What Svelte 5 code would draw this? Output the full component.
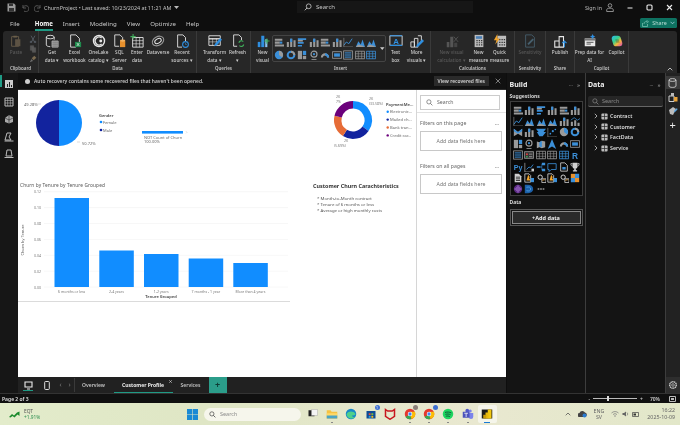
<script>
  const w = '#e8e8e8', g = '#9a9a9a', b = '#2f8fe0', o = '#e8912d', gr = '#3fae5a';

  // 16x16 ribbon glyphs
  const glyphs = {
    paste: `<path d="M3 3h8v11H3z" fill="none" stroke="#6b5f4a"/><path d="M7 6h6v8H7z" fill="#5d5344"/><path d="M5 2h4v2H5z" fill="#6b5f4a"/>`,
    db: `<ellipse cx="6" cy="3.5" rx="4.5" ry="2" fill="none" stroke="${w}"/><path d="M1.500 3.500v9c0 1 2 2 4.500 2M10.500 3.500v3" fill="none" stroke="${w}"/><path d="M8 8h7v7H8z" fill="#555" stroke="${w}" stroke-width=".7"/><path d="M10.300 8v7M12.600 8v7M8 10.400h7M8 12.700h7" stroke="${w}" stroke-width=".5"/>`,
    excel: `<path d="M3 1h6l4 4v6M3 1v14h6" fill="none" stroke="${w}"/><path d="M8 9h7v6H8z" fill="#1f8a4c"/><path d="M10 10.200l3 3.600M13 10.200l-3 3.600" stroke="#fff" stroke-width=".7"/>`,
    onelake: `<circle cx="8" cy="8" r="6.300" fill="none" stroke="${w}" stroke-width="1.600"/><path d="M11 4.500A4.500 4.500 0 1 0 11 11.500" fill="none" stroke="${w}" stroke-width="1.500"/><circle cx="10" cy="8" r="1.700" fill="${w}"/>`,
    sql: `<path d="M2 1h6l3 3v3M2 1v13h5" fill="none" stroke="${w}"/><path d="M8 7.500h6v7.500H8z" fill="${o}"/><ellipse cx="11" cy="7.500" rx="3" ry="1.300" fill="#f2b363"/>`,
    enter: `<path d="M3 4h12v11H3z" fill="none" stroke="${w}"/><path d="M3 7.600h12M3 11.200h12M7 4v11M11 4v11" stroke="${w}" stroke-width=".7"/><path d="M3.500 0v6M.5 3h6" stroke="${gr}" stroke-width="1.200"/>`,
    dataverse: `<ellipse cx="8" cy="8" rx="7" ry="5" fill="none" stroke="${g}" stroke-width="1.200" transform="rotate(-30 8 8)"/><ellipse cx="8" cy="8" rx="4" ry="2.500" fill="none" stroke="${w}" stroke-width="1.100" transform="rotate(-30 8 8)"/>`,
    recent: `<path d="M3 1h6l3 3v4M3 1v14h5" fill="none" stroke="${w}"/><circle cx="12" cy="12" r="3.300" fill="none" stroke="${b}" stroke-width="1.200"/><path d="M12 10.300V12h1.500" stroke="${b}" stroke-width=".7" fill="none"/>`,
    transform: `<path d="M1 2h13v11H1z" fill="none" stroke="${w}"/><path d="M1 5.500h13" stroke="${w}" stroke-width="1.500"/><path d="M1 9h10M5.300 5v8M9.600 5v8" stroke="${w}" stroke-width=".6"/><path d="M7 14l1-3 6-6.500 2 2L10 13z" fill="${b}"/>`,
    refresh: `<path d="M3 1h6l3 3v3M3 1v13h4" fill="none" stroke="${w}"/><path d="M9 10a3 3 0 0 1 5-1.400M14.600 12a3 3 0 0 1-5 1.400" fill="none" stroke="${gr}" stroke-width="1.200"/>`,
    newvisual: `<path d="M2 9h3v6H2z" fill="${b}"/><path d="M6 2h3.500v13H6z" fill="${b}"/><path d="M10.500 6H13v9h-2.500z" fill="#8cc2ee"/><path d="M12.500 5v6M9.500 8h6" stroke="${gr}" stroke-width="1.200"/>`,
    textbox: `<path d="M1 2h14v11H1z" fill="none" stroke="${w}"/><path d="M1 2h14M1 13h14" stroke="${b}" stroke-width="1.400"/><text x="8" y="11" font-size="9" font-family="Liberation Sans" font-weight="700" fill="${b}" text-anchor="middle">A</text>`,
    more: `<path d="M1 9h4v6H1z" fill="none" stroke="${w}"/><path d="M5 5h4v10H5z" fill="none" stroke="${w}"/><path d="M9 2h4v7" fill="none" stroke="${w}"/><path d="M7 15l1-3 6-6 2 2-6 6z" fill="${b}"/>`,
    newcalc: `<path d="M2 9h3v6H2zM6 3h3.500v12H6z" fill="#555"/><path d="M10 3l5 6M15 3l-5 6" stroke="#555"/><path d="M10.500 10H14v5h-3.500z" fill="#444"/>`,
    calc: `<path d="M3 1h10v14H3z" fill="#bdbdbd"/><path d="M4.500 2.500h7v3h-7z" fill="#4a7fb5"/><path d="M5 7.500h1.500M7.700 7.500h1.500M10.300 7.500h1.500M5 10h1.500M7.700 10h1.500M10.300 10h1.500M5 12.500h1.500M7.700 12.500h1.500M10.300 12.500h1.500" stroke="#333" stroke-width="1.300"/>`,
    quick: `<path d="M5 2h10v13H5z" fill="#bdbdbd"/><path d="M7 6.500h1.500M9.700 6.500h1.500M12.300 6.500h1.500M7 9.500h1.500M9.700 9.500h1.500M12.300 9.500h1.500M7 12.500h1.500M9.700 12.500h1.500M12.300 12.500h1.500" stroke="#333" stroke-width="1.300"/><path d="M5 0L1 7h3L2.500 12 8 5H5z" fill="#f2a52c"/>`,
    sens: `<path d="M3 1h7l3 3v11H3z" fill="none" stroke="#47606e"/><path d="M5 11l6-6 1.500 1.500-6 6z" fill="#47606e"/>`,
    publish: `<path d="M2 8h5v7H2zM7 3h5v12H7z" fill="none" stroke="${w}" stroke-width="1.200"/><path d="M13 15V8M10.500 10.500L13 8l2.500 2.500" fill="none" stroke="${b}" stroke-width="1.300"/>`,
    prep: `<path d="M2 5h12v9H2z" fill="${w}"/><path d="M2 5h12v2.500H2z" fill="#777"/><path d="M4 9.500h8M4 11.500h5" stroke="#444"/><path d="M11 0l1 2 2 1-2 1-1 2-1-2-2-1 2-1z" fill="${b}"/>`,
    copilot: `<path d="M5 2h4c2 0 3 1 3.500 3L14 10c.5 2-.5 4-3 4H7C5 14 4 13 3.500 11L2 6c-.5-2 1-4 3-4z" fill="url(#cop)"/><path d="M6 6h4l1 4H7z" fill="#1d1d1d" opacity=".25"/>`,
  };

  const mini = {
    hbar: c => `<path d="M1 2h9v2.500H1zM1 5.500h6V8H1zM1 9h11v2.500H1z" fill="${c[0]}"/><path d="M7 5.500h3V8H7z" fill="${c[1]}"/>`,
    vbar: c => `<path d="M1 6h2.500v6H1zM5 2h2.500v10H5zM9 4h2.500v8H9z" fill="${c[0]}"/><path d="M5 2h2.500v4H5z" fill="${c[1]}"/>`,
    hgrp: c => `<path d="M1 1.500h10v2H1zM1 6h7v2H1zM1 9.500h5v2H1z" fill="${c[1]}"/><path d="M1 3.500h6v2H1z" fill="${c[0]}"/>`,
    line: c => `<path d="M1 10l3-4 3 2 4-6" fill="none" stroke="${c[1]}" stroke-width="1.100"/><path d="M1 1v11h11" fill="none" stroke="${c[0]}" stroke-width=".7"/>`,
    area: c => `<path d="M1 12l3-7 3 4 2-6 3 9z" fill="${c[1]}"/><path d="M1 12l3-3 3 1 5 2z" fill="${c[0]}"/>`,
    combo: c => `<path d="M1 7h2.500v5H1zM5 5h2.500v7H5zM9 8h2.500v4H9z" fill="${c[0]}"/><path d="M1 5l4-3 4 3 3-2" fill="none" stroke="${c[1]}" stroke-width=".9"/>`,
    ribbon: c => `<path d="M1 2l5 4 5-4v9l-5-3-5 3z" fill="${c[0]}"/><path d="M1 2l5 4 5-4v3l-5 3-5-3z" fill="${c[1]}"/>`,
    funnel: c => `<path d="M0 2h12L9 6h3L8 11H4L1 6h2z" fill="${c[1]}"/>`,
    scatter: c => `<path d="M1 1v11h11" fill="none" stroke="${c[0]}" stroke-width=".7"/><circle cx="4" cy="8" r="1" fill="${c[1]}"/><circle cx="7" cy="5" r="1.300" fill="${c[1]}"/><circle cx="10" cy="3" r="1" fill="${c[1]}"/>`,
    pie: c => `<circle cx="6" cy="6" r="5" fill="${c[0]}"/><path d="M6 6V1a5 5 0 0 1 4 8z" fill="${c[1]}"/>`,
    donut: c => `<circle cx="6" cy="6" r="4" fill="none" stroke="${c[1]}" stroke-width="2.400"/><path d="M6 2a4 4 0 0 1 4 4" fill="none" stroke="${c[0]}" stroke-width="2.400"/>`,
    tree: c => `<path d="M1 1h5v10H1z" fill="${c[1]}"/><path d="M7 1h4v5H7z" fill="${c[0]}"/><path d="M7 7h4v4H7z" fill="${c[1]}"/>`,
    map: c => `<circle cx="6" cy="5" r="3.600" fill="none" stroke="${c[0]}" stroke-width="1.400"/><path d="M3 11h6v1.500H3z" fill="${c[0]}"/><circle cx="6" cy="5" r="1.300" fill="${c[1]}"/>`,
    filled: c => `<path d="M1 3l3 1 3-2 4 1v7l-4 1-3-1-3 1z" fill="${c[1]}"/><path d="M4 4l3-2v8l-3-1z" fill="${c[0]}"/>`,
    nav: c => `<path d="M6 0l5 12-5-3-5 3z" fill="${c[1]}"/>`,
    gauge: c => `<path d="M1 9a5 5 0 0 1 10 0H8.500a2.500 2.500 0 0 0-5 0z" fill="${c[0]}"/><path d="M6 4a5 5 0 0 1 5 5H8.500A2.500 2.500 0 0 0 6 6.500z" fill="${c[1]}"/>`,
    card: c => `<path d="M.5 2h11v8H.5z" fill="none" stroke="${c[0]}"/><path d="M2.500 4h7v4h-7z" fill="${c[1]}"/>`,
    kpi: c => `<path d="M.5 1h11v10H.5z" fill="none" stroke="${c[0]}"/><path d="M2 3.500h8M2 6h8M2 8.500h8" stroke="${c[1]}" stroke-width="1.200"/>`,
    slicer: c => `<path d="M.5 2h11v8H.5z" fill="#333" stroke="${c[0]}"/><circle cx="3.500" cy="5" r="1.200" fill="#e04040"/><circle cx="3.500" cy="8" r="1" fill="#3fae5a"/><path d="M6 5h4M6 8h4" stroke="${c[0]}"/>`,
    table: c => `<path d="M.5 1.500h11v9H.5z" fill="none" stroke="${c[0]}"/><path d="M.5 4.500h11M.5 7.500h11M4 1.500v9M8 1.500v9" stroke="${c[0]}" stroke-width=".7"/>`,
    matrix: c => `<path d="M.5 1.500h11v9H.5z" fill="none" stroke="${c[1]}"/><path d="M.5 4.500h11M.5 7.500h11M4 1.500v9M8 1.500v9" stroke="${c[1]}" stroke-width=".8"/>`,
    r: c => `<text x="6" y="10.500" font-size="10" font-weight="700" font-family="Liberation Sans" fill="${c[1]}" text-anchor="middle">R</text>`,
    py: c => `<text x="6" y="10" font-size="8.500" font-weight="700" font-family="Liberation Sans" fill="${c[1]}" text-anchor="middle">Py</text>`,
    decomp: c => `<path d="M1 1v11h11" fill="none" stroke="${c[0]}" stroke-width=".7"/><path d="M3 9l3-3 2 1 3-4" stroke="${c[1]}" fill="none"/><path d="M9 8h3v3H9z" fill="${c[0]}"/>`,
    tree2: c => `<path d="M1 5h4v2H1zM7 1h4v3H7zM7 8h4v3H7z" fill="${c[1]}"/><path d="M5 6h2V2.500M5 6h2v3.500" stroke="${c[1]}" fill="none" stroke-width=".6"/>`,
    chat: c => `<path d="M1 2h10v7H5l-2.500 2.500V9H1z" fill="none" stroke="${c[1]}"/>`,
    doc: c => `<path d="M2 1h5l3 3v7H2z" fill="none" stroke="${c[0]}"/><path d="M4 6h4v3H4z" fill="${c[1]}"/>`,
    trophy: c => `<path d="M3 1h6v4a3 3 0 0 1-6 0zM5 8h2v2H5zM3.500 10h5v1.500h-5z" fill="${c[0]}"/><path d="M3 2H1c0 2 1 3 2 3M9 2h2c0 2-1 3-2 3" fill="none" stroke="${c[0]}"/>`,
    paged: c => `<path d="M2 1h5l3 3v7H2z" fill="${c[0]}"/><path d="M3.500 5h5M3.500 7h5M3.500 9h5" stroke="#222"/>`,
    orange: c => `<path d="M1 1h5l2 2v8H1z" fill="none" stroke="${c[0]}"/><path d="M3 9l2-7 2 3-1 1 2 3z" fill="#f2a52c"/><path d="M8 6h4v5H8z" fill="${c[1]}"/>`,
    gear: c => `<circle cx="5" cy="5" r="2.600" fill="none" stroke="${c[0]}" stroke-width="1.200"/><path d="M7 7h5v4.500H7z" fill="none" stroke="${c[0]}"/><path d="M8 9.500l1.500-2 1 1" stroke="#f2a52c" fill="none"/>`,
    tile: c => `<path d="M1 1h5v5H1z" fill="#e8912d"/><path d="M6 6h5v5H6z" fill="#e8912d"/><path d="M6 1h5v5H6zM1 6h5v5H1z" fill="${c[1]}"/>`,
    orb: c => `<circle cx="6" cy="6" r="5" fill="#5a2a82"/><path d="M1.500 6h9M6 1v10" stroke="#b98be0" stroke-width=".6"/><circle cx="6" cy="6" r="2.500" fill="none" stroke="#b98be0" stroke-width=".6"/>`,
    d: c => `<path d="M1 1h4c3.500 0 6 2 6 5s-2.500 5-6 5H1z" fill="#1b5fa8"/><path d="M3 4c3-1 5 0 5 2s-2 3-5 2" fill="none" stroke="#58a8e8" stroke-width=".9"/>`,
    dots: c => `<path d="M2 6h2M5 6h2M8 6h2" stroke="#ddd" stroke-width="1.200"/>`,
  };

  const GB = ['#9a9a9a', '#3b8fd8'];
  const BG = ['#3b8fd8', '#9a9a9a'];
  const build = ['hbar','vbar','hgrp','vbar','hbar','vbar','line','area','area','area','vbar','combo','ribbon','vbar','funnel','scatter','pie','donut','tree','map','filled','nav','gauge','card','kpi','slicer','table','table','matrix','r'].map(k => [k, k === 'tree' || k === 'filled' ? BG : GB]);
  const buildRest = ['py','decomp','tree2','chat','doc','trophy','paged','orange','gear','orange','gear','tile','orb','d','dots'].map(k => [k, k === 'trophy' || k === 'paged' ? ['#d0d0d0', '#888'] : ['#cfcfcf', '#3b8fd8']]);
  const gallery = ['hbar','vbar','hgrp','vbar','hbar','vbar','line','area','area','pie','donut','tree','map','gauge','card','kpi','table','matrix'];

  const clipSmall = [
    `<path d="M3 1l5 9M9 1L4 10" stroke="#66707a" fill="none"/><circle cx="3" cy="10.500" r="1.300" fill="none" stroke="#66707a"/><circle cx="9" cy="10.500" r="1.300" fill="none" stroke="#66707a"/>`,
    `<path d="M2 1h5v7H2zM5 4h5v7H5z" fill="#555" stroke="#666" stroke-width=".6"/>`,
    `<path d="M8 1l3 3-4 4-3-3z" fill="#7a6a50"/><path d="M4 6l-3 5 5-2z" fill="#6d6d6d"/>`,
  ];

  const groups = [
    { label: 'Clipboard', w: 36, items: [{ g: 'paste', t: 'Paste', w: 26, off: true }], clip: true },
    { label: 'Data', w: 158, items: [
      { g: 'db', t: 'Get\ndata ▾', w: 22 }, { g: 'excel', t: 'Excel\nworkbook', w: 23 }, { g: 'onelake', t: 'OneLake\ncatalog ▾', w: 25 },
      { g: 'sql', t: 'SQL\nServer', w: 17 }, { g: 'enter', t: 'Enter\ndata', w: 18 }, { g: 'dataverse', t: 'Dataverse', w: 24 }, { g: 'recent', t: 'Recent\nsources ▾', w: 24 } ] },
    { label: 'Queries', w: 54, items: [{ g: 'transform', t: 'Transform\ndata ▾', w: 28 }, { g: 'refresh', t: 'Refresh\n▾', w: 18 }] },
    { label: 'Insert', w: 180, items: [{ g: 'newvisual', t: 'New\nvisual', w: 18 }, { gallery: true, w: 114 }, { g: 'textbox', t: 'Text\nbox', w: 20 }, { g: 'more', t: 'More\nvisuals ▾', w: 22 }] },
    { label: 'Calculations', w: 84, items: [{ g: 'newcalc', t: 'New visual\ncalculation ▾', w: 34, off: true }, { g: 'calc', t: 'New\nmeasure', w: 20 }, { g: 'quick', t: 'Quick\nmeasure', w: 22 }] },
    { label: 'Sensitivity', w: 31, items: [{ g: 'sens', t: 'Sensitivity\n▾', w: 29, off: true }] },
    { label: 'Share', w: 29, items: [{ g: 'publish', t: 'Publish', w: 25 }] },
    { label: 'Copilot', w: 54, items: [{ g: 'prep', t: 'Prep data for\nAI', w: 30 }, { g: 'copilot', t: 'Copilot', w: 24 }] },
  ];

  const bars = [
    { label: '6 months or less', x: 54.5, top: 197 },
    { label: '2-4 years', x: 99.3, top: 249.5 },
    { label: '1-2 years', x: 144, top: 253 },
    { label: '7 months - 1 year', x: 188.7, top: 257.5 },
    { label: 'More than 4 years', x: 233.3, top: 262 },
  ];
  const ticks = ['0.12', '0.10', '0.08', '0.06', '0.04', '0.02', '0.00'];

  function arc(cx, cy, r0, r1, a0, a1) {
    const p = (r, a) => `${(cx + r * Math.sin(a * Math.PI / 180)).toFixed(2)} ${(cy - r * Math.cos(a * Math.PI / 180)).toFixed(2)}`;
    const large = a1 - a0 > 180 ? 1 : 0;
    return `M${p(r1, a0)}A${r1} ${r1} 0 ${large} 1 ${p(r1, a1)}L${p(r0, a1)}A${r0} ${r0} 0 ${large} 0 ${p(r0, a0)}Z`;
  }
  const donut = [
    { c: '#118dff', a: [0, 125] },
    { c: '#12239e', a: [125, 212] },
    { c: '#e66c37', a: [212, 283] },
    { c: '#6b007b', a: [283, 360] },
  ];
  const payLegend = [['#118dff', 'Electronic...'], ['#12239e', 'Mailed ch...'], ['#e66c37', 'Bank tran...'], ['#6b007b', 'Credit car...']];

  const tables = ['Contract', 'Customer', 'FactData', 'Service'];
  const menu = ['File', 'Home', 'Insert', 'Modeling', 'View', 'Optimize', 'Help'];
  const railLeft = ['report', 'table', 'model', 'dax', 'query'];

  const chromeIcon = `<circle cx="8" cy="8" r="7" fill="#e5392f"/><path d="M8 8L2 12a7 7 0 0 0 8 2.700z" fill="#34a853"/><path d="M8 8l2 6.700A7 7 0 0 0 14.500 5H8z" fill="#fbbc05"/><circle cx="8" cy="8" r="3" fill="#fff"/><circle cx="8" cy="8" r="2.200" fill="#4285f4"/>`;
  const taskIcons = [
    { g: `<path d="M2 3h8v8H2z" fill="#222"/><path d="M6 2h8v8H6z" fill="#f4f4f4" stroke="#999" stroke-width=".5"/>` },
    { g: `<path d="M1 3h5l1.500 2H15v9H1z" fill="#f5c242"/><path d="M1 7h14v7H1z" fill="#ffd968"/><path d="M1 10h14v4H1z" fill="#2a9ad6" opacity=".85"/>`, dot: true },
    { g: `<circle cx="8" cy="8" r="7" fill="#1688c9"/><path d="M2 9c1-5 9-6 12-1 0 2-3 2-5 2 1 2 3 3 5 2-2 3-9 3-11-1z" fill="#4fd08a"/>` },
    { g: `<path d="M2 4h12v10H2z" fill="#0f4c97"/><path d="M5 7h2.500v2.500H5z" fill="#e8483a"/><path d="M8.500 7H11v2.500H8.500z" fill="#7cbb38"/><path d="M5 10.500h2.500V13H5z" fill="#29a3e3"/><path d="M8.500 10.500H11V13H8.500z" fill="#fcb813"/>`, badge: '1' },
    { g: `<path d="M2 2l3 2h6l3-2v9l-6 4-6-4z" fill="none" stroke="#c8161e" stroke-width="2"/>` },
    { g: chromeIcon, badge: '', dot: true, gray: true },
    { g: chromeIcon, badge: '', dot: true },
    { g: `<circle cx="8" cy="8" r="7" fill="#1ed760"/><path d="M4 6c3-1 6-.8 8.500.6M4.500 8.500c2.500-.8 5-.6 7 .6M5 11c2-.6 4-.4 5.500.5" fill="none" stroke="#143" stroke-width="1.100"/>`, dot: true },
    { g: `<circle cx="11" cy="4" r="2" fill="#7b83eb"/><path d="M8 6.500h7v5a3 3 0 0 1-6 0z" fill="#7b83eb"/><circle cx="7" cy="3.500" r="2.500" fill="#5059c9"/><path d="M1 5h9v8H1z" fill="#4b53bc"/><path d="M3 7h5M5.500 7v5" stroke="#fff"/>`, dot: true },
    { g: `<path d="M1 2h14v12H1z" fill="#1c1c1c"/><path d="M9 2h5v12H9z" fill="#f2c811"/><path d="M6 6h4v8H6z" fill="#e8b90e"/><path d="M3 9h4v5H3z" fill="#c99c0a"/>`, active: true },
  ];
</script>

<div class="app">
  <header class="titlebar">
    <div class="quick">
      <svg width="9" height="9" viewBox="0 0 9 9"><path d="M.5.5h6.500l1.500 1.500v6.500h-8z" fill="#999"/><path d="M2 .5h4v2.500H2zM2 5h5v3.500H2z" fill="#333"/></svg>
      <svg width="8" height="8" viewBox="0 0 8 8"><path d="M2 1v3h3M2 4a3 3 0 1 1 1 3" fill="none" stroke="#555"/></svg>
      <svg width="8" height="8" viewBox="0 0 8 8"><path d="M6 1v3H3M6 4a3 3 0 1 0-1 3" fill="none" stroke="#555"/></svg>
    </div>
    <span class="doc-title">ChurnProject • Last saved: 10/23/2024 at 11:21 AM</span>
    <svg class="doc-caret" width="5" height="4" viewBox="0 0 5 4"><path d="M0 0h5L2.500 3z" fill="#bbb"/></svg>
    <div class="top-search">
      <svg width="8" height="8" viewBox="0 0 8 8"><circle cx="4.700" cy="3.300" r="2.400" fill="none" stroke="#ccc" stroke-width=".8"/><path d="M3 5L.8 7.300" stroke="#ccc" stroke-width=".9"/></svg>
      <span>Search</span>
    </div>
    <div class="account">
      <span>Sign in</span>
      <svg width="8" height="9" viewBox="0 0 8 9"><circle cx="4" cy="2.500" r="1.800" fill="none" stroke="#aaa" stroke-width=".8"/><path d="M.7 8.500V7c0-1.200 1-1.800 3.300-1.800S7.300 5.800 7.300 7v1.500z" fill="none" stroke="#aaa" stroke-width=".8"/></svg>
    </div>
    <div class="win-btns">
      <svg width="6" height="6" viewBox="0 0 6 6"><path d="M.5 3h5" stroke="#eee" stroke-width="1"/></svg>
      <svg width="7" height="7" viewBox="0 0 7 7"><rect x="1" y="1" width="5" height="5" rx="1" fill="none" stroke="#eee" stroke-width="1.100"/></svg>
      <svg width="7" height="7" viewBox="0 0 7 7"><path d="M1 1l5 5M6 1L1 6" stroke="#eee" stroke-width="1.100"/></svg>
    </div>
  </header>

  <nav class="menubar">
    <div class="menus">
      {#each menu as m}
        <span class="menu-item" class:current={m === 'Home'} class:file={m === 'File'}>{m}</span>
      {/each}
    </div>
    <button class="share">
      <svg width="7" height="7" viewBox="0 0 7 7"><path d="M.5 3v3.500h5V4M2 4c0-2 1-2.500 3-2.500M4.500.3L6.500 1.700 4.500 3" fill="none" stroke="#7fc8b8" stroke-width=".7"/></svg>
      Share
      <svg width="5" height="4" viewBox="0 0 5 4"><path d="M.5.8l2 2 2-2" fill="none" stroke="#bde" stroke-width=".7"/></svg>
    </button>
  </nav>

  <section class="ribbon">
    {#each groups as group}
      <div class="rgroup" style="width:{group.w}px">
        <div class="rbtns">
          {#each group.items as item}
            {#if item.gallery}
              <div class="gallery">
                <div class="gallery-grid">
                  {#each gallery as k, i}
                    <svg width="10" height="10" viewBox="0 0 12 12">{@html mini[k](i === 9 || i === 11 ? BG : GB)}</svg>
                  {/each}
                </div>
                <svg class="gallery-caret" width="5" height="4" viewBox="0 0 5 4"><path d="M0 0h5L2.500 3z" fill="#ccc"/></svg>
              </div>
            {:else}
              <div class="rbtn" class:off={item.off} style="width:{item.w}px">
                <svg width="14" height="14" viewBox="0 0 16 16">{@html glyphs[item.g]}</svg>
                <span>{item.t}</span>
              </div>
            {/if}
          {/each}
          {#if group.clip}
            <div class="clip-small">
              {#each clipSmall as c}
                <svg width="8" height="8" viewBox="0 0 12 12">{@html c}</svg>
              {/each}
            </div>
          {/if}
        </div>
        <div class="rlabel">{group.label}</div>
      </div>
    {/each}
    <svg class="collapse" width="6" height="4" viewBox="0 0 6 4"><path d="M.7 3.300L3 1l2.300 2.300" fill="none" stroke="#ddd" stroke-width=".8"/></svg>
  </section>

  <svg width="0" height="0" class="defs"><defs>
    <linearGradient id="cop" x1="0" y1="0" x2="1" y2="1">
      <stop offset="0" stop-color="#2ab7f0"/><stop offset=".4" stop-color="#37d18a"/><stop offset=".65" stop-color="#f4b73b"/><stop offset="1" stop-color="#d83cc0"/>
    </linearGradient>
  </defs></svg>

  <main class="workspace">
    <aside class="rail-left">
      <i class="rail-mark"></i>
      {#each railLeft as r, i}
        <svg width="10" height="10" viewBox="0 0 10 10">
          {#if i === 0}
            <path d="M1 1h8v8H1z" fill="#ccc"/><path d="M3 8V5h1v3zM5 8V3h1v5zM7 8V6h1v2z" fill="#222"/>
          {:else if i === 1}
            <path d="M1 1h8v8H1z" fill="none" stroke="#bbb"/><path d="M1 3.500h8M1 6h8M3.700 1v8M6.300 1v8" stroke="#bbb" stroke-width=".6"/>
          {:else if i === 2}
            <path d="M1 4l4-3 4 2v5L5 9.500 1 8z" fill="#aaa"/><path d="M5 1v8.500M1 4l4 2 4-2" stroke="#222" stroke-width=".6" fill="none"/>
          {:else if i === 3}
            <path d="M3 1h4l-2 4 2 3H1z" fill="none" stroke="#bbb"/><path d="M.5 9h9" stroke="#bbb"/>
          {:else}
            <path d="M3 1h4l1 6H2z" fill="none" stroke="#bbb"/><path d="M.5 8.500h9" stroke="#bbb"/>
          {/if}
        </svg>
      {/each}
    </aside>

    <div class="center">
      <div class="notice">
        <span class="notice-dot"></span>
        <span class="notice-text">Auto recovery contains some recovered files that haven't been opened.</span>
        <span class="notice-btn">View recovered files</span>
        <svg width="6" height="6" viewBox="0 0 6 6"><path d="M.7.700l4.600 4.600M5.300.700L.7 5.300" stroke="#aaa" stroke-width=".7"/></svg>
      </div>

      <div class="sheet">
        <div class="canvas">
          <!-- report visuals sit on a free canvas, so they are placed by coordinates -->
          <svg class="visual pie" width="300" height="60" viewBox="18 90 300 60">
            <path d="M59 99a23 23 0 0 1 0 46z" fill="#118dff"/>
            <path d="M59 99a23 23 0 0 0 0 46z" fill="#12239e"/>
            <path d="M37 103h4M77 141h3" stroke="#bbb" stroke-width=".5"/>
            <text x="24" y="104.500" class="tiny">49.28%</text>
            <text x="82" y="143.500" class="tiny">50.72%</text>
            <text x="99" y="116" class="tiny strong">Gender</text>
            <circle cx="101" cy="121" r="1.300" fill="#118dff"/><text x="103" y="122.700" class="tiny">Female</text>
            <circle cx="101" cy="129" r="1.300" fill="#12239e"/><text x="103" y="130.700" class="tiny">Male</text>
            <rect x="142" y="130" width="41" height="2.600" fill="#118dff"/>
            <path d="M186 130.300l1 1-1 1" stroke="#aaa" stroke-width=".4" fill="none"/>
            <text x="144" y="137.500" class="tiny">NOT Count of Churn</text>
            <text x="144" y="142" class="tiny">100.00%</text>
          </svg>

          <svg class="visual donut" width="86" height="65" viewBox="330 90 86 65">
            {#each donut as s}
              <path d={arc(353, 119, 11.5, 19, s.a[0], s.a[1])} fill={s.c}/>
            {/each}
            <text x="336" y="97" class="micro">2K</text>
            <text x="336" y="101.500" class="micro">7%</text>
            <text x="369" y="99" class="micro">2K</text>
            <text x="369" y="103.500" class="micro">(33.58%)</text>
            <text x="344" y="141" class="micro">2K</text>
            <text x="334" y="146" class="micro">(5.69%)</text>
            <text x="386" y="105" class="legend strong">PaymentMe...</text>
            {#each payLegend as [c, t], i}
              <circle cx="387.700" cy={110.7 + i * 7.9} r="1.200" fill={c}/>
              <text x="390" y={112.2 + i * 7.9} class="legend">{t}</text>
            {/each}
          </svg>

          <svg class="visual bars" width="285" height="125" viewBox="18 178 285 125">
            <text x="20" y="185.500" class="title">Churn by Tenure by Tenure Grouped</text>
            {#each ticks as t, i}
              <path d="M44 {190.7 + i * 15.9}H288" stroke="#eee" stroke-width=".5"/>
              <text x="41" y={192.3 + i * 15.9} class="micro" text-anchor="end">{t}</text>
            {/each}
            <text x="0" y="0" class="tiny" text-anchor="middle" transform="translate(24 239) rotate(-90)">Churn by Tenure</text>
            {#each bars as bar}
              <rect x={bar.x} y={bar.top} width="34.500" height={286 - bar.top} fill="#118dff"/>
              <text x={bar.x + 17.2} y="291.500" class="micro" text-anchor="middle">{bar.label}</text>
            {/each}
            <text x="161" y="297" class="tiny strong" text-anchor="middle">Tenure Grouped</text>
            <path d="M18 300.500H290" stroke="#ccc" stroke-width=".7"/>
          </svg>

          <div class="visual notes">
            <h3>Customer Churn Carachteristics</h3>
            <p>* Month-to-Month contract</p>
            <p>* Tenure of 6 months or less</p>
            <p>* Average or high monthly costs</p>
          </div>
        </div>

        <aside class="filters">
          <div class="f-search">
            <svg width="7" height="7" viewBox="0 0 8 8"><circle cx="3.300" cy="3.300" r="2.400" fill="none" stroke="#666" stroke-width=".8"/><path d="M5 5l2.300 2.300" stroke="#666" stroke-width=".9"/></svg>
            <span>Search</span>
          </div>
          <div class="f-rule"></div>
          <div class="f-section">
            <div class="f-head"><span>Filters on this page</span><span>...</span></div>
            <div class="f-box">Add data fields here</div>
          </div>
          <div class="f-section">
            <div class="f-head"><span>Filters on all pages</span><span>...</span></div>
            <div class="f-box">Add data fields here</div>
          </div>
        </aside>
      </div>

      <div class="tabs">
        <div class="tab-icon on">
          <svg width="9" height="9" viewBox="0 0 9 9"><path d="M1 1h7v5H1z" fill="none" stroke="#eee" stroke-width="1.100"/><path d="M3 8h3" stroke="#eee"/></svg>
        </div>
        <div class="tab-icon">
          <svg width="6" height="9" viewBox="0 0 6 9"><rect x=".7" y=".5" width="4.600" height="8" rx=".8" fill="none" stroke="#ddd"/></svg>
        </div>
        <span class="tab-arrow">‹</span><span class="tab-arrow">›</span>
        <span class="tab-sep"></span>
        <span class="tab">Overview</span>
        <span class="tab current">Customer Profile<svg class="tab-x" width="3" height="3" viewBox="0 0 3 3"><path d="M.2.200l2.600 2.600M2.800.200L.2 2.800" stroke="#ddd" stroke-width=".6"/></svg></span>
        <span class="tab services">Services</span>
        <span class="tab-add">+</span>
      </div>
    </div>

    <section class="build">
      <div class="pane-head"><strong>Build</strong><span>···</span><span class="chev">»</span></div>
      <div class="pane-sub">Suggestions</div>
      <div class="viz-grid">
        {#each [...build, ...buildRest] as [k, c]}
          <svg width="10" height="10" viewBox="0 0 12 12">{@html mini[k](c)}</svg>
        {/each}
      </div>
      <div class="pane-sub data-sub">Data</div>
      <div class="add-wrap"><div class="add-btn">+Add data</div></div>
    </section>

    <section class="data">
      <div class="pane-head"><strong>Data</strong><span>···</span><span class="chev">»</span></div>
      <div class="d-search">
        <svg width="7" height="7" viewBox="0 0 8 8"><circle cx="3.300" cy="3.300" r="2.400" fill="none" stroke="#888" stroke-width=".8"/><path d="M5 5l2.300 2.300" stroke="#888" stroke-width=".9"/></svg>
        <span>Search</span>
      </div>
      <ul class="tree">
        {#each tables as t}
          <li>
            <svg width="4" height="6" viewBox="0 0 4 6"><path d="M.8.800L3 3 .8 5.200" fill="none" stroke="#ccc" stroke-width=".8"/></svg>
            <svg width="7" height="7" viewBox="0 0 7 7"><rect x=".4" y=".4" width="6.200" height="6.200" rx="1" fill="#bbb"/><path d="M.4 3.500h6.200M3.500.4v6.200" stroke="#222" stroke-width=".7"/></svg>
            <span>{t}</span>
          </li>
        {/each}
      </ul>
    </section>

    <aside class="rail-right">
      <div class="rr-top">
        <div class="rr-item active">
          <svg width="9" height="10" viewBox="0 0 9 10"><ellipse cx="4.500" cy="2" rx="3.500" ry="1.400" fill="none" stroke="#ddd" stroke-width=".8"/><path d="M1 2v6c0 .8 1.500 1.400 3.500 1.400S8 8.800 8 8V2" fill="none" stroke="#ddd" stroke-width=".8"/></svg>
        </div>
        <div class="rr-item">
          <svg width="10" height="10" viewBox="0 0 10 10"><path d="M1 4h5v5.500H1z" fill="none" stroke="#ccc"/><path d="M3 1h3v3H3z" fill="#bbb"/><path d="M6 5h3.500v4.500H6z" fill="#e8a33a"/></svg>
        </div>
        <div class="rr-item">
          <svg width="10" height="10" viewBox="0 0 10 10"><path d="M1 4l4-3 3 2-3 6-3-1z" fill="#bbb"/><path d="M6 5l3-3 .5 1.500-3 3z" fill="#5aa7e6"/></svg>
        </div>
        <div class="rr-item plus">+</div>
      </div>
      <div class="rr-gear">
        <svg width="10" height="10" viewBox="0 0 10 10"><circle cx="5" cy="5" r="3.300" fill="none" stroke="#ccc" stroke-width="1.400" stroke-dasharray="1.300 .5"/><circle cx="5" cy="5" r="1.300" fill="none" stroke="#ccc" stroke-width=".7"/></svg>
      </div>
    </aside>
  </main>

  <footer class="statusbar">
    <span class="page-no">Page 2 of 3</span>
    <div class="zoom">
      <span>-</span>
      <div class="slider"><i class="thumb"></i></div>
      <span>+</span>
      <span class="zoom-val">70%</span>
      <svg width="7" height="6" viewBox="0 0 7 6"><path d="M.5.500h6v5h-6z" fill="none" stroke="#bbb"/><path d="M2 2h3v2H2z" fill="#bbb"/></svg>
    </div>
  </footer>

  <div class="taskbar">
    <div class="stock">
      <svg width="11" height="7" viewBox="0 0 11 7"><path d="M0 6l3-3 2 1.500L8 1.500l2.500-1V5l-2-1.500-3 3-2-1.500-2 1.500z" fill="#1b8a2d"/></svg>
      <div><span>EQT</span><span class="up">+1.91%</span></div>
    </div>
    <div class="tb-center">
      <svg width="11" height="11" viewBox="0 0 11 11"><path d="M0 0h5.200v5.200H0zM5.800 0H11v5.200H5.800zM0 5.800h5.200V11H0zM5.800 5.800H11V11H5.800z" fill="#1a8ad4"/></svg>
      <div class="tb-search">
        <svg width="7" height="7" viewBox="0 0 8 8"><circle cx="3.300" cy="3.300" r="2.400" fill="none" stroke="#444" stroke-width=".8"/><path d="M5 5l2.300 2.300" stroke="#444" stroke-width=".9"/></svg>
        <span>Search</span>
      </div>
      <div class="tb-icons">
        {#each taskIcons as t}
          <div class="tb-icon" class:active={t.active}>
            <svg width="12" height="12" viewBox="0 0 16 16">{@html t.g}</svg>
            {#if t.badge !== undefined}<i class="badge" class:gray={t.gray}>{t.badge}</i>{/if}
            {#if t.dot}<i class="run"></i>{/if}
            {#if t.active}<i class="run on"></i>{/if}
          </div>
        {/each}
      </div>
    </div>
    <div class="tray">
      <svg width="6" height="4" viewBox="0 0 6 4"><path d="M.7 3.300L3 1l2.300 2.300" fill="none" stroke="#444" stroke-width=".7"/></svg>
      <svg width="9" height="8" viewBox="0 0 9 8"><path d="M1.500 7a2 2 0 0 1 0-4 3 3 0 0 1 5.500-.5A2.300 2.300 0 0 1 7 7z" fill="#444"/><circle cx="6.500" cy="5.500" r="2" fill="#2a7bd0"/></svg>
      <div class="lang"><span>ENG</span><span>SV</span></div>
      <div class="tray-sys">
        <svg width="8" height="6" viewBox="0 0 8 6"><path d="M.5 2a5 5 0 0 1 7 0M2 3.500a3 3 0 0 1 4 0" fill="none" stroke="#777" stroke-width=".7"/><circle cx="4" cy="5" r=".7" fill="#777"/></svg>
        <svg width="7" height="6" viewBox="0 0 7 6"><path d="M.5 2h1.500L4 .5v5L2 4H.5z" fill="#666"/><path d="M5 1.500a2 2 0 0 1 0 3" fill="none" stroke="#666" stroke-width=".6"/></svg>
        <svg width="8" height="5" viewBox="0 0 8 5"><path d="M.5.500h6v4h-6z" fill="none" stroke="#444" stroke-width=".7"/><path d="M1.500 1.500h2.500v2H1.500z" fill="#333"/></svg>
      </div>
      <div class="clock"><span>16:22</span><span>2025-10-09</span></div>
    </div>
  </div>
</div>

<style>
  :global(body) { margin: 0; background: #0d0d0d; }
  .app {
    width: 680px;
    height: 425px;
    display: flex;
    flex-direction: column;
    overflow: hidden;
    font-family: "Noto Sans", "Open Sans", sans-serif;
    color: #ddd;
    background: #0e0e0e;
    position: relative;
    filter: blur(.3px);
  }
  .defs { position: absolute; }

  /* title bar */
  .titlebar { height: 15px; flex: none; display: flex; align-items: center; position: relative; font-size: 5.4px; }
  .quick { display: flex; align-items: center; gap: 5px; padding-left: 7px; width: 37px; }
  .doc-title { color: #c4c4c4; white-space: nowrap; }
  .doc-caret { margin-left: 3px; }
  .top-search {
    position: absolute; left: 297px; width: 176px; top: 1px; height: 12px;
    display: flex; align-items: center; gap: 4px; padding-left: 7px; box-sizing: border-box;
    background: #161616; color: #c8c8c8; font-size: 6px;
  }
  .account { margin-left: auto; display: flex; align-items: center; gap: 4px; color: #bbb; margin-right: 13px; }
  .win-btns { display: flex; gap: 13px; align-items: center; padding-right: 7px; }

  /* menu row */
  .menubar { height: 16px; flex: none; display: flex; align-items: center; justify-content: space-between; font-size: 6.1px; padding-right: 3px; }
  .menus { display: flex; gap: 10px; padding-left: 10px; color: #c9c9c9; }
  .menu-item { position: relative; padding: 3px 0; }
  .menu-item.file { margin-right: 5px; }
  .menu-item.current { color: #fff; font-weight: 700; }
  .menu-item.current::after { content: ""; position: absolute; left: 0; right: 0; bottom: 0; height: 1.5px; background: #1f9b85; }
  .share {
    all: unset; display: flex; align-items: center; gap: 3px; width: 37px; height: 10px; box-sizing: border-box; justify-content: center;
    background: #0e7261; border-radius: 1.5px; font-size: 5.4px; color: #b9ddd5;
  }

  /* ribbon */
  .ribbon {
    height: 42px; flex: none; margin: 0 3px; background: #272727; border-radius: 3px 3px 0 0;
    display: flex; position: relative; box-sizing: border-box;
  }
  .rgroup { display: flex; flex-direction: column; border-right: .5px solid #3a3a3a; box-sizing: border-box; }
  .rbtns { flex: 1; display: flex; justify-content: center; padding-top: 3px; min-height: 0; }
  .rbtn { display: flex; flex-direction: column; align-items: center; color: #cfcfcf; flex: none; }
  .rbtn span { font-size: 4.7px; line-height: 7.5px; text-align: center; white-space: pre; margin-top: 1px; font-weight: 500; }
  .rbtn.off, .rbtn.off span { color: #5a5a5a; }
  .clip-small { display: flex; flex-direction: column; gap: 2px; padding-top: 1px; width: 9px; }
  .rlabel { height: 9px; line-height: 8px; font-size: 4.5px; text-align: center; color: #c4c4c4; font-weight: 600; flex: none; }
  .gallery { width: 114px; height: 27px; border: .5px solid #444; border-radius: 2px; display: flex; align-items: center; box-sizing: border-box; padding-left: 1px; flex: none; margin-top: 1px; }
  .gallery-grid { display: grid; grid-template-columns: repeat(9, 11.5px); row-gap: 3px; justify-items: center; }
  .gallery-caret { margin-left: 3px; }
  .collapse { position: absolute; right: 4px; bottom: 2px; }

  /* main area */
  .workspace { flex: 1; min-height: 0; display: flex; }
  .rail-left {
    width: 18px; flex: none; display: flex; flex-direction: column; align-items: center; gap: 7.5px; padding-top: 6px; box-sizing: border-box; background: #161616; position: relative;
  }
  .rail-mark { position: absolute; left: 0; top: 2px; width: 1.5px; height: 12px; background: #1f9b85; }
  .center { width: 488px; flex: none; display: flex; flex-direction: column; background: #141414; }
  .notice {
    height: 16px; flex: none; display: flex; align-items: center; background: #111; font-size: 4.9px; color: #c8c8c8; padding-right: 5px;
  }
  .notice-dot { width: 5px; height: 5px; border-radius: 50%; background: #cfcfcf; margin-left: 7px; margin-right: 4px; }
  .notice-text { font-weight: 600; }
  .notice-btn { margin-left: auto; margin-right: 6px; background: #2a2a2a; padding: 0 4px; height: 10px; line-height: 10px; color: #d5d5d5; font-weight: 600; }
  .sheet { flex: 1; min-height: 0; display: flex; background: #fff; border-top: 1px solid #2b2b2b; color: #555; }
  .canvas { width: 398px; flex: none; position: relative; }
  .visual { position: absolute; }
  .pie { left: 0; top: 1px; }
  .donut { left: 312px; top: 1px; }
  .bars { left: 0; top: 89px; }
  .tiny { font-size: 4px; fill: #666; }
  .micro { font-size: 3.5px; fill: #777; }
  .legend { font-size: 4.1px; fill: #666; }
  .strong { font-weight: 600; fill: #444; }
  .title { font-size: 4.8px; fill: #555; letter-spacing: .1px; }
  .notes { left: 295px; top: 92px; font-size: 4.3px; color: #555; }
  .notes h3 { margin: 0 0 4.5px; font-size: 5.4px; color: #333; font-weight: 700; white-space: nowrap; }
  .notes p { margin: 0 0 0 4px; line-height: 6.4px; white-space: nowrap; }

  .filters { flex: 1; border-left: 1px solid #d6d6d6; padding: 5px 3px 0 3px; box-sizing: border-box; display: flex; flex-direction: column; font-size: 5.2px; line-height: 7px; color: #666; }
  .f-search { width: 80px; height: 15px; box-sizing: border-box; border: .7px solid #ccc; display: flex; align-items: center; gap: 4px; padding-left: 5px; flex: none; }
  .f-rule { height: 1px; background: #e2e2e2; margin: 2px -3px 0; flex: none; }
  .f-section { display: flex; flex-direction: column; }
  .f-section + .f-section { margin-top: 5px; }
  .f-head { display: flex; justify-content: space-between; padding: 0 4px 4px 0; height: 18px; align-items: flex-end; box-sizing: border-box; }
  .f-box { width: 82px; height: 20px; box-sizing: border-box; border: .8px solid #c8c8c8; display: flex; align-items: center; justify-content: center; color: #777; }

  .tabs { height: 16px; flex: none; display: flex; align-items: stretch; font-size: 5px; background: #212121; color: #c4c4c4; }
  .tab-icon { width: 18px; display: flex; align-items: center; justify-content: center; position: relative; margin-left: 1px; }
  .tab-icon.on::after { content: ""; position: absolute; left: 4px; right: 4px; bottom: 2px; height: 1px; background: #1f9b85; }
  .tab-arrow { width: 9px; text-align: center; line-height: 15px; color: #777; font-size: 7px; }
  .tab-sep { width: .5px; background: #3a3a3a; margin: 1px 0; }
  .tab { display: flex; align-items: center; justify-content: center; width: 38px; font-weight: 600; position: relative; }
  .tab.current { width: 59px; margin-left: 1px; color: #eee; font-weight: 700; border-bottom: 1px solid #1f9b85; box-sizing: border-box; }
  .tab.services { width: 36px; }
  .tab-x { position: absolute; right: 1px; top: 3px; }
  .tab-add { width: 18px; background: #2b9d8a; color: #0f3b34; font-size: 9px; font-weight: 700; text-align: center; line-height: 15px; }

  /* side panes */
  .build, .data { width: 79.5px; flex: none; border-right: .5px solid #3d3d3d; background: #141414; box-sizing: border-box; padding: 0 3px; }
  .build { margin-left: .5px; }
  .pane-head { height: 11px; margin-top: 6px; display: flex; align-items: center; font-size: 5px; color: #aaa; gap: 4px; }
  .pane-head strong { font-size: 7px; color: #eee; font-weight: 700; margin-right: auto; }
  .chev { margin-right: 2px; font-size: 6px; }
  .pane-sub { font-size: 5px; font-weight: 700; color: #d5d5d5; height: 9px; line-height: 9px; margin-top: 1.5px; }
  .data-sub { margin-top: 2px; height: 10px; }
  .viz-grid {
    width: 73px; height: 95px; box-sizing: border-box; border: 1px solid #3d3d3d; background: #0a0a0a; padding: 2px 1.5px; margin-top: .5px;
    display: grid; grid-template-columns: repeat(6, 11.5px); grid-auto-rows: 11.4px; justify-items: center; align-items: center;
  }
  .add-wrap { width: 73px; height: 17px; box-sizing: border-box; border: 1px solid #555; padding: 1px; margin-top: 1px; }
  .add-btn { height: 100%; background: #2a2a2a; border: .5px solid #888; box-sizing: border-box; display: flex; align-items: center; justify-content: center; font-size: 5.5px; font-weight: 700; color: #f0f0f0; }
  .data { padding: 0 2px; }
  .d-search { height: 10px; border-bottom: 1px solid #666; background: #262626; border-radius: 2px; margin-top: 6px; display: flex; align-items: center; gap: 3px; padding-left: 4px; font-size: 5.5px; color: #8a8a8a; }
  .tree { list-style: none; margin: 4px 0 0; padding: 0 0 0 6px; }
  .tree li { height: 10.6px; display: flex; align-items: center; gap: 2.5px; font-size: 5.3px; font-weight: 600; color: #ddd; }

  .rail-right { flex: 1; background: #222; display: flex; flex-direction: column; justify-content: space-between; }
  .rr-top { display: flex; flex-direction: column; align-items: center; padding-top: 3px; }
  .rr-item { width: 100%; height: 14px; display: flex; align-items: center; justify-content: center; color: #eee; }
  .rr-item.active { background: #3a3a3a; height: 13px; margin-bottom: .5px; }
  .rr-item.plus { font-size: 11px; line-height: 14px; }
  .rr-gear { height: 16px; display: flex; align-items: center; justify-content: center; background: #2e2e2e; }

  .statusbar { height: 10px; flex: none; display: flex; align-items: center; justify-content: space-between; background: #101010; font-size: 5px; font-weight: 600; border-top: .5px solid #333; box-sizing: border-box; }
  .page-no { padding-left: 2px; color: #e0e0e0; }
  .zoom { display: flex; align-items: center; gap: 3px; padding-right: 4px; color: #ccc; }
  .slider { width: 44px; height: 1px; background: #bbb; position: relative; }
  .thumb { position: absolute; left: 14px; top: -2px; width: 1.5px; height: 5px; background: #ddd; }
  .zoom-val { margin: 0 6px 0 4px; }

  .taskbar {
    height: 22px; flex: none; display: flex; align-items: center; position: relative; color: #555; font-size: 4.8px;
    background: linear-gradient(90deg, #e3eccb 0%, #dfe6c5 30%, #e9e8d0 70%, #e2e7c9 100%);
  }
  .stock { display: flex; align-items: center; gap: 4px; padding-left: 9px; }
  .stock div { display: flex; flex-direction: column; line-height: 6.5px; }
  .up { color: #2f8f52; }
  .tb-center { position: absolute; left: 187px; top: 0; bottom: 0; display: flex; align-items: center; }
  .tb-search { width: 97px; height: 13px; margin-left: 6px; background: #f6f6ec; border-radius: 7px; display: flex; align-items: center; gap: 4px; padding-left: 5px; box-sizing: border-box; font-size: 5.5px; color: #8a8a8a; }
  .tb-icons { display: flex; margin-left: 2px; }
  .tb-icon { width: 19.4px; height: 18px; display: flex; align-items: center; justify-content: center; position: relative; }
  .tb-icon.active { background: #f5f5ea; border-radius: 2px; }
  .badge { position: absolute; right: 1px; top: 0; width: 5px; height: 5px; border-radius: 50%; background: #3d6fd0; font-size: 3.5px; font-style: normal; color: #fff; text-align: center; line-height: 5px; }
  .badge.gray { background: #8a7f78; }
  .run { position: absolute; bottom: 0; left: 50%; width: 2px; height: 1px; margin-left: -1px; background: #888; }
  .run.on { width: 6px; margin-left: -3px; background: #1a7bd4; }
  .tray { margin-left: auto; display: flex; align-items: center; gap: 7px; padding-right: 5px; color: #666; font-size: 5.3px; }
  .lang { display: flex; flex-direction: column; align-items: center; line-height: 6.5px; }
  .tray-sys { display: flex; gap: 3px; align-items: center; }
  .clock { display: flex; flex-direction: column; align-items: flex-end; line-height: 6.8px; }
</style>
